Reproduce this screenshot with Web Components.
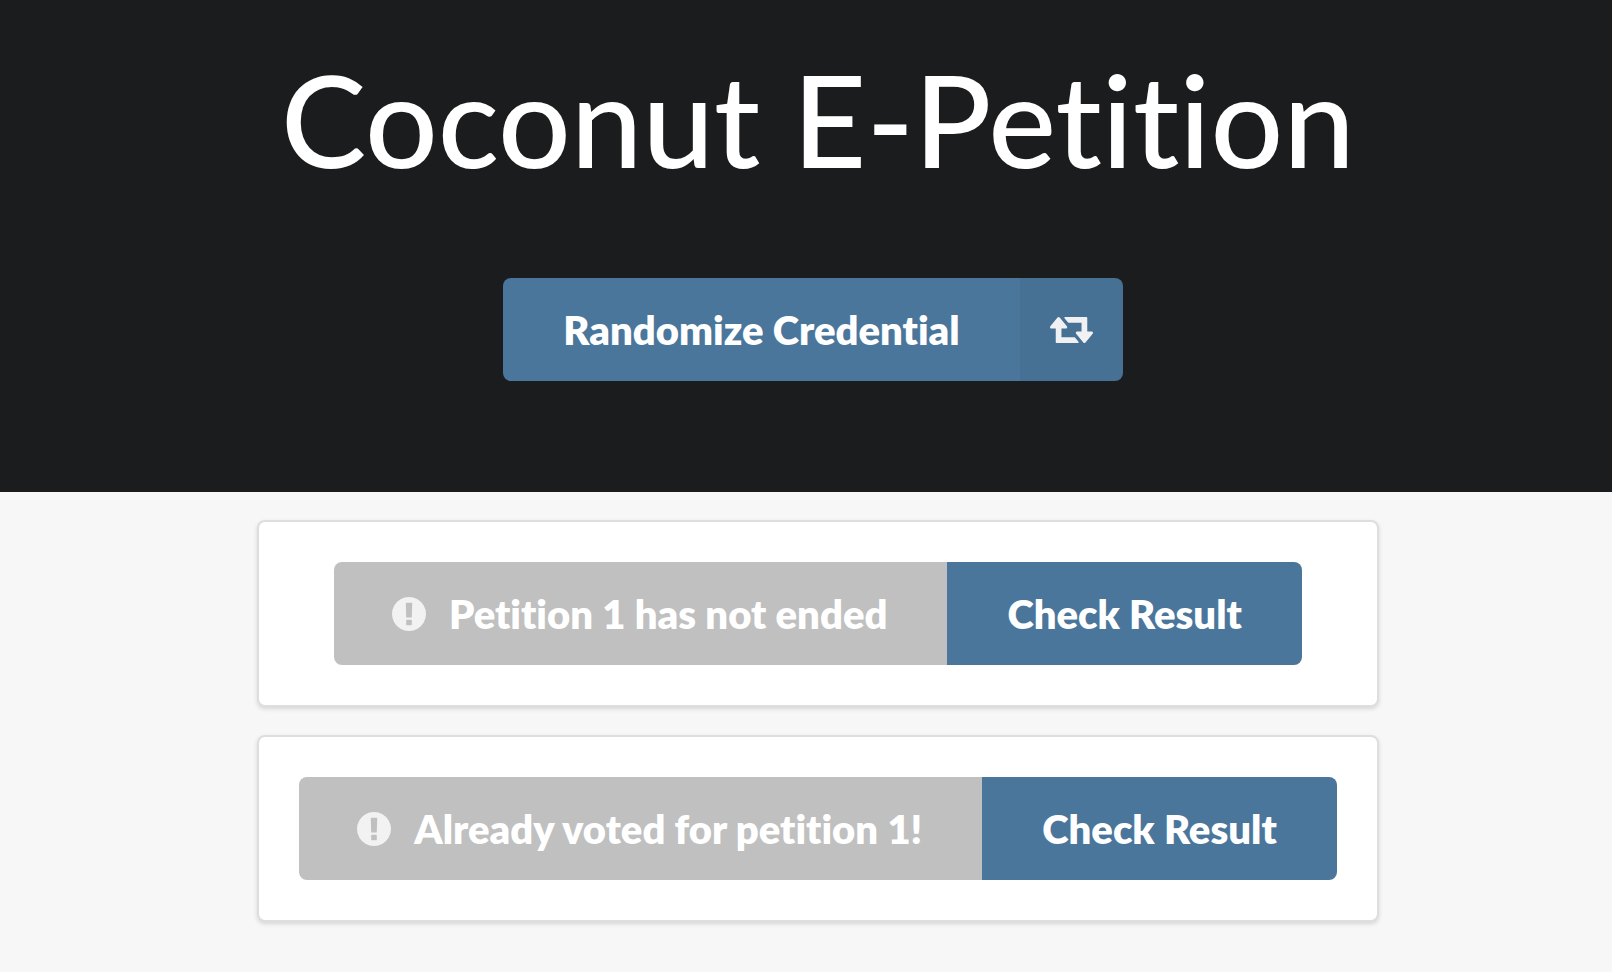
<!DOCTYPE html>
<html lang="en">
<head>
<meta charset="utf-8">
<title>Coconut E-Petition</title>
<style>
  body {
    margin: 0;
    min-height: 100vh;
    background: #f7f7f7;
    font-family: Lato, "Liberation Sans", sans-serif;
    font-variant-ligatures: none;
  }
</style>
</head>
<body>
<petition-header heading="Coconut E-Petition">
  <ui-button icon="retweet" labeled>Randomize Credential</ui-button>
</petition-header>
<petition-list>
  <petition-card status="Petition 1 has not ended"></petition-card>
  <petition-card status="Already voted for petition 1!"></petition-card>
</petition-list>

<script>
const ICONS = {
  retweet: {
    viewBox: "0 384 1920 1152",
    width: 43,
    height: 26,
    path: "M1280 1504q0 13-9.5 22.5t-22.5 9.5h-960q-8 0-13.5-2t-9-7-5.5-8-3-11.5-1-11.5v-600h-192q-26 0-45-19t-19-45q0-24 15-41l320-384q19-22 49-22t49 22l320 384q15 17 15 41 0 26-19 45t-45 19h-192v384h576q16 0 25 11l160 192q7 11 7 21zm640-416q0 24-15 41l-320 384q-20 23-49 23t-49-23l-320-384q-15-17-15-41 0-26 19-45t45-19h192v-384h-576q-16 0-25-12l-160-192q-7-9-7-20 0-13 9.5-22.5t22.5-9.5h960q8 0 13.5 2t9 7 5.5 8 3 11.5 1 11.5v600h192q26 0 45 19t19 45z"
  },
  warning: {
    viewBox: "128 128 1536 1536",
    width: 34,
    height: 34,
    path: "M896 128q209 0 385.5 103t279.5 279.5 103 385.5-103 385.5-279.5 279.5-385.5 103-385.5-103-279.5-279.5-103-385.5 103-385.5 279.5-279.5 385.5-103zm128 1247v-190q0-14-9-23.5t-22-9.5h-192q-13 0-23 10t-10 23v190q0 13 10 23t23 10h192q13 0 22-9.5t9-23.5zm-2-344l18-621q0-12-10-18-10-8-24-8h-220q-14 0-24 8-10 6-10 18l17 621q0 10 10 17.5t24 7.5h185q14 0 23.5-7.5t10.5-17.5z"
  }
};

class UiButton extends HTMLElement {
  constructor() {
    super();
    this.attachShadow({ mode: "open" });
  }

  connectedCallback() {
    const icon = ICONS[this.getAttribute("icon")];
    const svg = icon
      ? `<span class="icon"><svg viewBox="${icon.viewBox}" width="${icon.width}" height="${icon.height}" aria-hidden="true"><path d="${icon.path}"/></svg></span>`
      : "";

    this.shadowRoot.innerHTML = `
      <style>
        :host {
          display: inline-flex;
          border-radius: 8px;
          overflow: hidden;
        }
        button {
          display: flex;
          align-items: center;
          justify-content: center;
          min-height: 103px;
          margin: 0;
          padding: 0 60px;
          border: 0;
          background: #4a769c;
          color: #fff;
          font: 800 40px/40px Lato, "Liberation Sans", sans-serif;
          font-variant-ligatures: none;
          white-space: nowrap;
          cursor: pointer;
        }
        .icon {
          display: flex;
          align-items: center;
          justify-content: center;
          width: 47px;
          margin: 0 17px 0 -9px;
        }
        svg { display: block; fill: #f1f1f4; }
        :host([status]) button { background: #c0c0c0; cursor: default; }
        :host([status]) svg { fill: #f2f2f2; }

        /* icon sits in its own darker block at the right edge */
        :host([labeled]) button { padding-right: 0; }
        :host([labeled]) .icon {
          order: 1;
          align-self: stretch;
          width: 103px;
          margin: 0 0 0 60px;
          background: rgba(0, 0, 0, 0.05);
        }
      </style>
      <button type="button">${svg}<span><slot></slot></span></button>
    `;
  }
}

class PetitionHeader extends HTMLElement {
  constructor() {
    super();
    this.attachShadow({ mode: "open" });
  }

  connectedCallback() {
    this.shadowRoot.innerHTML = `
      <style>
        :host {
          display: flex;
          flex-direction: column;
          align-items: center;
          gap: 82px;
          padding: 42px 0 111px 24px;
          background: #1b1c1d;
          color: #fff;
        }
        h1 {
          margin: 0;
          font-size: 128px;
          line-height: 154px;
          font-weight: 500;
          text-align: center;
        }
        .actions { margin-right: 10px; display: flex; }
      </style>
      <h1></h1>
      <div class="actions"><slot></slot></div>
    `;
    this.shadowRoot.querySelector("h1").textContent = this.getAttribute("heading");
  }
}

class PetitionList extends HTMLElement {
  constructor() {
    super();
    this.attachShadow({ mode: "open" });
    this.shadowRoot.innerHTML = `
      <style>
        :host {
          display: flex;
          justify-content: center;
          padding: 28px 0 28px 24px;
        }
        .stack { display: grid; gap: 28px; }
      </style>
      <div class="stack"><slot></slot></div>
    `;
  }
}

class PetitionCard extends HTMLElement {
  constructor() {
    super();
    this.attachShadow({ mode: "open" });
  }

  connectedCallback() {
    this.shadowRoot.innerHTML = `
      <style>
        :host {
          display: flex;
          justify-content: center;
          padding: 40px;
          border: 2px solid #dededf;
          border-radius: 8px;
          background: #fff;
          box-shadow: 0 2px 4px rgba(34, 36, 38, 0.15);
        }
        .status { border-radius: 8px 0 0 8px; }
        .result { border-radius: 0 8px 8px 0; }
      </style>
      <ui-button class="status" icon="warning" status></ui-button>
      <ui-button class="result">Check Result</ui-button>
    `;
    this.shadowRoot.querySelector(".status").textContent = this.getAttribute("status");
  }
}

customElements.define("ui-button", UiButton);
customElements.define("petition-header", PetitionHeader);
customElements.define("petition-list", PetitionList);
customElements.define("petition-card", PetitionCard);
</script>
</body>
</html>
